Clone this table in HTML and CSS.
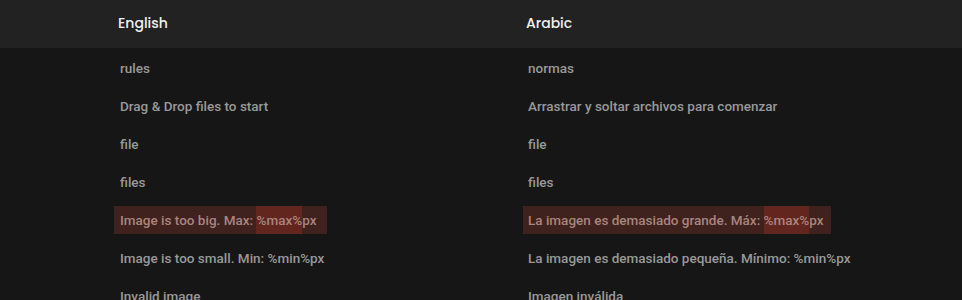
FILE: index.html
```html
<!DOCTYPE html>
<html>
<head>
<meta charset="utf-8">
<link rel="stylesheet" href="styles.css">
</head>
<body>
<div class="table">
  <div class="head">
    <div class="hcell">English</div>
    <div class="hcell">Arabic</div>
  </div>
  <div class="row"><div class="cell"><span class="txt">rules</span></div><div class="cell"><span class="txt">normas</span></div></div>
  <div class="row"><div class="cell"><span class="txt">Drag &amp; Drop files to start</span></div><div class="cell"><span class="txt">Arrastrar y soltar archivos para comenzar</span></div></div>
  <div class="row"><div class="cell"><span class="txt">file</span></div><div class="cell"><span class="txt">file</span></div></div>
  <div class="row"><div class="cell"><span class="txt">files</span></div><div class="cell"><span class="txt">files</span></div></div>
  <div class="row"><div class="cell"><span class="txt hl hl-en">Image is too big. Max: <span class="var">%max%</span>px</span></div><div class="cell"><span class="txt hl hl-es">La imagen es demasiado grande. Máx: <span class="var">%max%</span>px</span></div></div>
  <div class="row"><div class="cell"><span class="txt">Image is too small. Min: %min%px</span></div><div class="cell"><span class="txt">La imagen es demasiado pequeña. Mínimo: %min%px</span></div></div>
  <div class="row"><div class="cell"><span class="txt">Invalid image</span></div><div class="cell"><span class="txt">Imagen inválida</span></div></div>
</div>
</body>
</html>
```
FILE: styles.css
```css
html, body {
  margin: 0;
  padding: 0;
  background: #161616;
  overflow: hidden;
}
.table {
  display: flex;
  flex-direction: column;
}
.head {
  display: grid;
  grid-template-columns: 408px 408px;
  height: 48px;
  background: #222222;
  box-sizing: border-box;
  padding-left: 114px;
  padding-bottom: 2px;
  align-items: center;
}
.hcell {
  padding-left: 4px;
  font-family: "Poppins", "Lato", "Inter", sans-serif;
  font-size: 14px;
  font-weight: 500;
  color: #f0f0f0;
}
.row {
  display: grid;
  grid-template-columns: 408px 408px;
  height: 38px;
  box-sizing: border-box;
  padding-top: 2px;
  padding-left: 114px;
  align-items: center;
}
.cell {
  display: flex;
  align-items: center;
}
.txt {
  display: inline-block;
  padding: 4px 6px;
  line-height: 20px;
  font-family: Roboto, "Liberation Sans", sans-serif;
  font-size: 13.5px;
  font-weight: 500;
  color: #999999;
}
.hl {
  background: #3f211d;
  color: #a8857f;
}
.hl-en {
  padding-right: 11px;
}
.hl-es {
  margin-left: 1px;
  padding-left: 5px;
  padding-right: 7px;
}
.var {
  display: inline-block;
  background: #62261e;
  padding: 4px 0;
  margin: -4px 0;
}
```
